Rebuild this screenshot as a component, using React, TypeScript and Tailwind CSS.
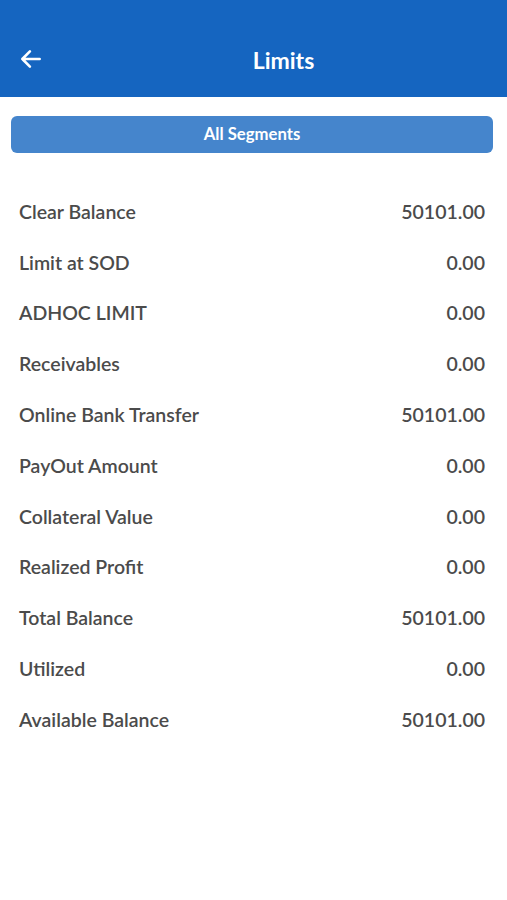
import React from 'react'

interface LimitRow {
  label: string
  value: string
}

const rows: LimitRow[] = [
  { label: 'Clear Balance', value: '50101.00' },
  { label: 'Limit at SOD', value: '0.00' },
  { label: 'ADHOC LIMIT', value: '0.00' },
  { label: 'Receivables', value: '0.00' },
  { label: 'Online Bank Transfer', value: '50101.00' },
  { label: 'PayOut Amount', value: '0.00' },
  { label: 'Collateral Value', value: '0.00' },
  { label: 'Realized Profit', value: '0.00' },
  { label: 'Total Balance', value: '50101.00' },
  { label: 'Utilized', value: '0.00' },
  { label: 'Available Balance', value: '50101.00' },
]

const App: React.FC = () => {
  return (
    <div className="min-h-[900px] w-full bg-white font-['Lato','Liberation_Sans',sans-serif]">
      <header className="relative flex h-[97px] items-end bg-[#1565c0] pb-[22px] pl-[60px]">
        <button type="button" className="absolute left-[18px] bottom-[25px] text-white" aria-label="Back">
          <svg
            xmlns="http://www.w3.org/2000/svg"
            viewBox="0 0 24 24"
            fill="none"
            stroke="currentColor"
            strokeWidth="2.4"
            className="h-[26px] w-[26px]"
          >
            <path strokeLinecap="round" strokeLinejoin="round" d="M20 12H4M11 5l-7 7 7 7" />
          </svg>
        </button>
        <h1 className="w-full text-center text-[23px] font-bold leading-[30px] text-white">Limits</h1>
      </header>

      <div className="pl-[11px] pr-[14px] pt-[19px]">
        <button
          type="button"
          className="flex h-[37px] w-full items-center justify-center rounded-[6px] bg-[#4585cc] text-[16.7px] font-bold text-white"
        >
          All Segments
        </button>
      </div>

      <div className="px-[19px] pt-[33px] pr-[22px]">
        {rows.map((row) => (
          <div key={row.label} className="flex h-[50.8px] items-center justify-between text-[19.5px] font-semibold text-[#4b4b4b]">
            <span>{row.label}</span>
            <span>{row.value}</span>
          </div>
        ))}
      </div>
    </div>
  )
}

export default App
